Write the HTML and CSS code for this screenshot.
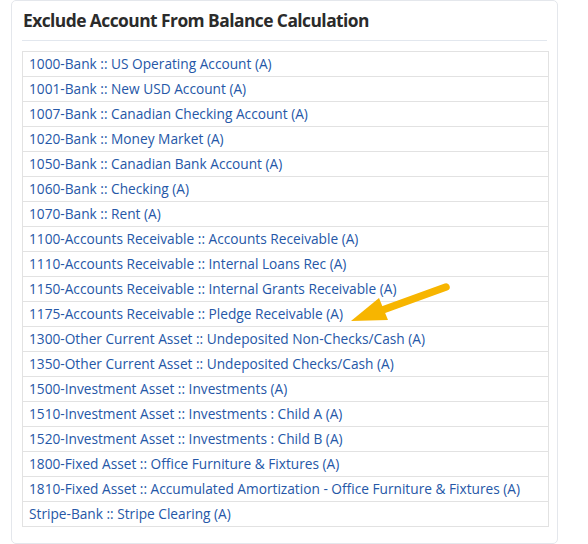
FILE: index.html
```html
<!DOCTYPE html>
<html lang="en">
<head>
    <meta charset="UTF-8">
    <title>Exclude Account From Balance Calculation</title>
    <link rel="stylesheet" href="styles.css">
</head>
<body>

<div class="panel">
    <h3 class="panel-title">Exclude Account From Balance Calculation</h3>
    <table class="account-list">
        <tr><td><a href="#">1000-Bank :: US Operating Account (A)</a></td></tr>
        <tr><td><a href="#">1001-Bank :: New USD Account (A)</a></td></tr>
        <tr><td><a href="#">1007-Bank :: Canadian Checking Account (A)</a></td></tr>
        <tr><td><a href="#">1020-Bank :: Money Market (A)</a></td></tr>
        <tr><td><a href="#">1050-Bank :: Canadian Bank Account (A)</a></td></tr>
        <tr><td><a href="#">1060-Bank :: Checking (A)</a></td></tr>
        <tr><td><a href="#">1070-Bank :: Rent (A)</a></td></tr>
        <tr><td><a href="#">1100-Accounts Receivable :: Accounts Receivable (A)</a></td></tr>
        <tr><td><a href="#">1110-Accounts Receivable :: Internal Loans Rec (A)</a></td></tr>
        <tr><td><a href="#">1150-Accounts Receivable :: Internal Grants Receivable (A)</a></td></tr>
        <tr><td class="marked"><a href="#">1175-Accounts Receivable :: Pledge Receivable (A)</a>
            <!-- annotation arrow -->
            <svg class="arrow" width="110" height="45" viewBox="0 0 110 45">
                <line x1="99" y1="5" x2="30" y2="30" stroke="#f7b500" stroke-width="7.5" stroke-linecap="round"/>
                <polygon points="4,39 32,16 41,38" fill="#f7b500"/>
            </svg>
        </td></tr>
        <tr><td><a href="#">1300-Other Current Asset :: Undeposited Non-Checks/Cash (A)</a></td></tr>
        <tr><td><a href="#">1350-Other Current Asset :: Undeposited Checks/Cash (A)</a></td></tr>
        <tr><td><a href="#">1500-Investment Asset :: Investments (A)</a></td></tr>
        <tr><td><a href="#">1510-Investment Asset :: Investments : Child A (A)</a></td></tr>
        <tr><td><a href="#">1520-Investment Asset :: Investments : Child B (A)</a></td></tr>
        <tr><td><a href="#">1800-Fixed Asset :: Office Furniture &amp; Fixtures (A)</a></td></tr>
        <tr><td><a href="#">1810-Fixed Asset :: Accumulated Amortization - Office Furniture &amp; Fixtures (A)</a></td></tr>
        <tr><td><a href="#">Stripe-Bank :: Stripe Clearing (A)</a></td></tr>
    </table>
</div>

</body>
</html>
```

FILE: styles.css
```css
body {
    margin: 0;
    padding: 0;
    background-color: #fff;
    font-family: "Open Sans", Arial, sans-serif;
}
.panel {
    width: 525px;
    margin-left: 11px;
    padding: 0 10px 16px 10px;
    border: 1px solid #e4e7ec;
    border-radius: 5px;
    background-color: #fff;
}
.panel-title {
    margin: 0 0 10px 0;
    padding: 8px 1px 8px 1px;
    font-size: 17.4px;
    line-height: 23px;
    font-weight: bold;
    color: #2b2b2b;
    border-bottom: 1px solid #e2e7ee;
    letter-spacing: -0.55px;
}
.account-list {
    width: 527px;
    border-collapse: collapse;
    border: 1px solid #e2e2e2;
}
.account-list td {
    height: 24px;
    padding: 0 6px;
    border-top: 1px solid #e2e2e2;
    font-size: 13.7px;
    line-height: 24px;
    white-space: nowrap;
}
.account-list a {
    color: #2557a7;
    text-decoration: none;
}
.marked {
    position: relative;
}
.arrow {
    position: absolute;
    left: 324px;
    top: -20px;
}
```
